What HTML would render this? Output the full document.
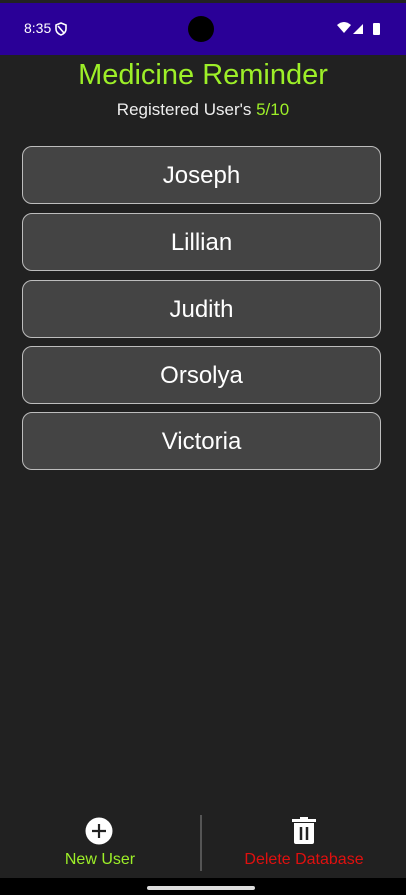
<!DOCTYPE html>
<html><head><style>
body{margin:0;width:406px;height:895px;background:#212121;font-family:"Liberation Sans",sans-serif;position:relative;overflow:hidden}
.top{position:absolute;top:0;left:0;width:406px;height:3px;background:#222}
.sb{position:absolute;top:3px;left:0;width:406px;height:52px;background:#2a0097;color:#fff}
.cam{position:absolute;left:188px;top:13px;width:26px;height:26px;border-radius:50%;background:#000}
.t{position:absolute;top:0;width:406px;text-align:center;color:#9def28}
.b{position:absolute;left:22px;width:357px;height:56px;background:#444;border:1px solid #bdbdbd;border-radius:10px;color:#fff;font-size:24px;text-align:center;line-height:58px}
.nav{position:absolute;top:878px;left:0;width:406px;height:17px;background:#000}
</style></head><body>
<div class="top"></div>
<div class="sb">
<div style="position:absolute;left:24px;top:17px;font-size:14px">8:35</div>
<svg style="position:absolute;left:55px;top:19px" width="12" height="14" viewBox="0 0 12 14"><path d="M6 1L11 3V7C11 10 8.5 12 6 13C3.5 12 1 10 1 7V3Z M3 4L9 11" fill="none" stroke="#fff" stroke-width="1.6"/></svg>
<div class="cam"></div>
<svg style="position:absolute;left:337px;top:18px" width="46" height="16" viewBox="0 0 46 16"><path d="M0 4Q7 -2 14 4L7 12Z" fill="#fff"/><path d="M16 13L26 3V13Z" fill="#fff"/><rect x="36" y="2" width="7" height="12" rx="1" fill="#fff"/></svg>
</div>
<div class="t" style="top:59px;font-size:29px">Medicine Reminder</div>
<div class="t" style="top:100px;font-size:17px;color:#eee">Registered User's <span style="color:#9def28">5/10</span></div>
<div class="b" style="top:146px">Joseph</div>
<div class="b" style="top:213px">Lillian</div>
<div class="b" style="top:280px">Judith</div>
<div class="b" style="top:346px">Orsolya</div>
<div class="b" style="top:412px">Victoria</div>
<svg style="position:absolute;left:85px;top:817px" width="28" height="28" viewBox="0 0 28 28"><circle cx="14" cy="14" r="13.5" fill="#fff"/><path d="M14 7V21M7 14H21" stroke="#222" stroke-width="2.2"/></svg>
<div style="position:absolute;left:200px;top:815px;width:2px;height:56px;background:#555"></div>
<svg style="position:absolute;left:291px;top:817px" width="26" height="28" viewBox="0 0 26 28"><rect x="1" y="2" width="24" height="3" fill="#fff"/><rect x="9" y="0" width="8" height="3" fill="#fff"/><path d="M3 6H23V25Q23 27 21 27H5Q3 27 3 25Z" fill="#fff"/><path d="M10 10V23M16 10V23" stroke="#222" stroke-width="2.5"/></svg>
<div style="position:absolute;left:0;width:200px;top:851px;text-align:center;color:#9def28;font-size:16px">New User</div>
<div style="position:absolute;left:202px;width:204px;top:851px;text-align:center;color:#e0100f;font-size:16px">Delete Database</div>
<div class="nav"><div style="position:absolute;left:147px;top:8px;width:108px;height:4px;border-radius:2px;background:#ddd"></div></div>
</body></html>
